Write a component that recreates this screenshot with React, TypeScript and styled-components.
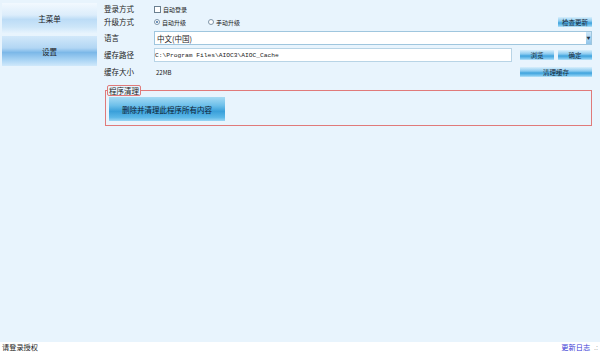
import React from 'react';
import styled, { createGlobalStyle } from 'styled-components';

const GlobalStyle = createGlobalStyle`
  html, body {
    margin: 0;
    padding: 0;
    background: #ffffff;
  }
  body {
    font-family: "Noto Sans CJK SC", "Liberation Sans", sans-serif;
    color: #1c1c1c;
  }
`;

const Window = styled.div`
  width: 600px;
  height: 352px;
  display: flex;
  flex-direction: column;
  overflow: hidden;
`;

const Body = styled.div`
  flex: 1;
  display: flex;
  background: #e8f4fd;
`;

const Sidebar = styled.div`
  width: 100px;
  padding: 3px 2px;
  box-sizing: border-box;
  display: flex;
  flex-direction: column;
  gap: 3px;
`;

const NavButton = styled.div<{ $active?: boolean }>`
  height: 30px;
  display: flex;
  align-items: center;
  justify-content: center;
  font-size: 7.5px;
  color: #222;
  background: ${(p) =>
    p.$active
      ? 'linear-gradient(#d2e8fa 0%, #b2d6f4 40%, #7cb8e8 55%, #a9d4f4 80%, #d0e9fb 100%)'
      : 'linear-gradient(#f2f9ff 0%, #dcedfb 40%, #bcdcf6 55%, #cde6f9 80%, #e6f3fd 100%)'};
`;

const Content = styled.div`
  flex: 1;
  padding: 3px 8px 0 5px;
  display: flex;
  flex-direction: column;
`;

const Row = styled.div<{ $h: number; $mt?: number }>`
  display: grid;
  grid-template-columns: 50px 1fr;
  align-items: center;
  height: ${(p) => p.$h}px;
  margin-top: ${(p) => p.$mt ?? 0}px;
`;

const Label = styled.span`
  font-size: 7.5px;
  line-height: 1;
`;

const Field = styled.div`
  display: flex;
  align-items: center;
  gap: 4px;
  height: 100%;
`;

const Option = styled.label`
  display: flex;
  align-items: center;
  gap: 2px;
  font-size: 6px;
  margin-right: 18px;
`;

const Check = styled.span`
  width: 5px;
  height: 5px;
  border: 1px solid #6a7f90;
  background: #fff;
`;

const Radio = styled.span<{ $on?: boolean }>`
  width: 4px;
  height: 4px;
  border: 1px solid #7f95a8;
  border-radius: 50%;
  background: #fff;
  position: relative;
  &::after {
    content: '';
    display: ${(p) => (p.$on ? 'block' : 'none')};
    position: absolute;
    left: 1px;
    top: 1px;
    width: 2px;
    height: 2px;
    border-radius: 50%;
    background: #3a6ea5;
  }
`;

const Spacer = styled.div`
  flex: 1;
`;

const SmallButton = styled.div<{ $w: number }>`
  width: ${(p) => p.$w}px;
  height: 10px;
  display: flex;
  align-items: center;
  justify-content: center;
  font-size: 6.5px;
  color: #1a2a3a;
  background: linear-gradient(#d8effc 0%, #8ccbf0 40%, #3fa3dd 60%, #7cc6ef 85%, #b9e3f9 100%);
`;

const Combo = styled.div`
  flex: 1;
  height: 14px;
  box-sizing: border-box;
  border: 1px solid #9fc6de;
  background: #fff;
  display: flex;
  align-items: center;
  padding-left: 2px;
  font-size: 7.5px;
`;

const ComboArrow = styled.span`
  margin-left: auto;
  width: 5px;
  height: 12px;
  background: linear-gradient(#cfe7f8, #8fc4ea);
  display: flex;
  align-items: center;
  justify-content: center;
  font-size: 4px;
  color: #234;
`;

const PathInput = styled.div`
  width: 358px;
  height: 14px;
  box-sizing: border-box;
  border: 1px solid #b8d4e6;
  background: #fff;
  display: flex;
  align-items: center;
  font-family: "Liberation Mono", monospace;
  font-size: 6.25px;
  white-space: pre;
  color: #222;
`;

const Value = styled.span`
  font-size: 6px;
  padding-left: 2px;
`;

const Group = styled.div`
  margin: 12px 0 0 1px;
  height: 36px;
  box-sizing: border-box;
  border: 1px solid #e07a7a;
  position: relative;
  padding: 6px 3px;
`;

const Legend = styled.span`
  position: absolute;
  left: 1px;
  top: -6px;
  padding: 0 1px;
  font-size: 7.5px;
  line-height: 9px;
  background: #e8f4fd;
  border: 1px solid #e07a7a;
  border-radius: 2px;
`;

const BigButton = styled.div`
  width: 116px;
  height: 24px;
  display: flex;
  align-items: center;
  justify-content: center;
  font-size: 7.5px;
  color: #102030;
  background: linear-gradient(#a6dbf4 0%, #6ec0ea 35%, #3aa0da 60%, #5cb8e8 85%, #9ad6f4 100%);
`;

const StatusBar = styled.div`
  height: 10px;
  display: flex;
  align-items: center;
  padding: 0 2px;
  font-size: 7.2px;
  background: #fff;
`;

const Link = styled.span`
  margin-left: auto;
  color: #3a3ad6;
`;

const Grip = styled.span`
  font-family: "Liberation Sans", sans-serif;
  font-size: 7px;
  line-height: 1;
  color: #8a8a8a;
  margin-left: 4px;
`;

export default function App() {
  return (
    <Window>
      <GlobalStyle />
      <Body>
        <Sidebar>
          <NavButton>主菜单</NavButton>
          <NavButton $active>设置</NavButton>
        </Sidebar>
        <Content>
          <Row $h={12}>
            <Label>登录方式</Label>
            <Field>
              <Option>
                <Check />
                自动登录
              </Option>
            </Field>
          </Row>
          <Row $h={14}>
            <Label>升级方式</Label>
            <Field>
              <Option>
                <Radio $on />
                自动升级
              </Option>
              <Option>
                <Radio />
                手动升级
              </Option>
              <Spacer />
              <SmallButton $w={34}>检查更新</SmallButton>
            </Field>
          </Row>
          <Row $h={14} $mt={2}>
            <Label>语言</Label>
            <Field>
              <Combo>
                中文(中国)
                <ComboArrow>▼</ComboArrow>
              </Combo>
            </Field>
          </Row>
          <Row $h={14} $mt={3}>
            <Label>缓存路径</Label>
            <Field>
              <PathInput>C:\Program Files\AIOC3\AIOC_Cache</PathInput>
              <Spacer />
              <SmallButton $w={34}>浏览</SmallButton>
              <SmallButton $w={34}>确定</SmallButton>
            </Field>
          </Row>
          <Row $h={12} $mt={4}>
            <Label>缓存大小</Label>
            <Field>
              <Value>22MB</Value>
              <Spacer />
              <SmallButton $w={72}>清理缓存</SmallButton>
            </Field>
          </Row>
          <Group>
            <Legend>程序清理</Legend>
            <BigButton>删除并清理此程序所有内容</BigButton>
          </Group>
        </Content>
      </Body>
      <StatusBar>
        请登录授权
        <Link>更新日志</Link>
        <Grip>.:</Grip>
      </StatusBar>
    </Window>
  );
}
